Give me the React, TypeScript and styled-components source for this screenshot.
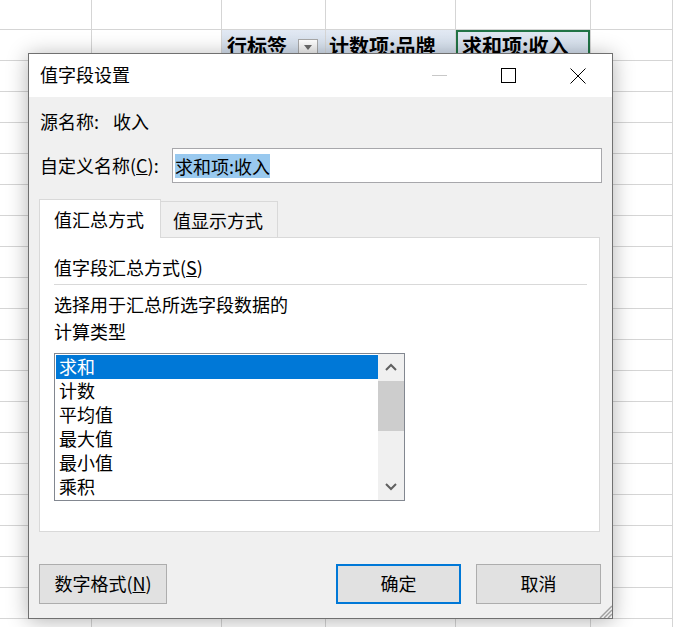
import React from 'react';
import styled, { createGlobalStyle } from 'styled-components';

const GlobalStyle = createGlobalStyle`
    html, body {
        margin: 0;
        padding: 0;
        background: #ffffff;
        overflow: hidden;
    }

    body {
        font-family: "Noto Sans CJK SC", "Noto Sans", sans-serif;
        color: #000000;
    }
`;

const UI_FONT = `"Noto Sans CJK SC", "Noto Sans", sans-serif`;

const Page = styled.div`
    position: relative;
    width: 673px;
    height: 627px;
    overflow: hidden;
`;

const Sheet = styled.div`
    display: grid;
    grid-template-columns: 92px 130px 104px 130px 135px 1fr;
    grid-template-rows: 30px;
    grid-auto-rows: 31px;
`;

interface CellProps {
    $header?: boolean;
    $selected?: boolean;
    $indent?: number;
}

const Cell = styled.div<CellProps>`
    box-sizing: border-box;
    display: flex;
    align-items: center;
    padding-left: ${({ $indent }) => $indent ?? 5}px;
    border-right: 1px solid #d5d5d5;
    border-bottom: 1px solid #d5d5d5;
    font-family: ${UI_FONT};
    font-weight: 700;
    font-size: 20px;
    line-height: 31px;
    white-space: nowrap;
    overflow: hidden;
    background: ${({ $header }) => $header ? 'linear-gradient(#e2e9f3, #cdd9e8)' : 'transparent'};
    ${({ $selected }) => $selected && `box-shadow: inset 0 0 0 2px #217346;`}
`;

const FilterButton = styled.span`
    box-sizing: border-box;
    display: flex;
    align-items: center;
    justify-content: center;
    width: 20px;
    height: 20px;
    margin-left: auto;
    margin-right: 7px;
    margin-top: 8px;
    border: 1px solid #a9a9a9;
    background: linear-gradient(#ffffff, #e6e6e6);

    &::after {
        content: '';
        margin-top: -4px;
        border-left: 4px solid transparent;
        border-right: 4px solid transparent;
        border-top: 5px solid #6a6a6a;
    }
`;

const Dialog = styled.div`
    position: absolute;
    left: 28px;
    top: 53px;
    width: 585px;
    height: 566px;
    box-sizing: border-box;
    display: flex;
    flex-direction: column;
    border: 1px solid #707070;
    background: #f0f0f0;
    box-shadow: 0 2px 20px rgba(0, 0, 0, 0.3);
    font-family: ${UI_FONT};
    font-size: 18px;
`;

const TitleBar = styled.div`
    display: flex;
    align-items: center;
    height: 43px;
    background: #ffffff;
    padding-left: 11px;
`;

const Title = styled.div`
    flex: 1;
    line-height: 24px;
    padding-bottom: 3px;
`;

const WindowButton = styled.div`
    display: flex;
    align-items: center;
    justify-content: center;
    width: 69px;
    height: 43px;
`;

const Body = styled.div`
    flex: 1;
    display: flex;
    flex-direction: column;
    padding: 0 10px 14px 10px;
`;

const SourceRow = styled.div`
    display: flex;
    margin-top: 12px;
    padding-left: 1px;
    line-height: 24px;
`;

const SourceLabel = styled.span`
    width: 73px;
`;

const NameRow = styled.div`
    display: flex;
    align-items: center;
    margin-top: 15px;
    height: 35px;
`;

const NameLabel = styled.label`
    width: 133px;
    padding-left: 1px;
    padding-bottom: 1px;
    box-sizing: border-box;
    line-height: 24px;
`;

const NameInput = styled.div`
    flex: 1;
    box-sizing: border-box;
    height: 35px;
    display: flex;
    align-items: center;
    padding-left: 2px;
    border: 1px solid #a7a7ab;
    background: #ffffff;
`;

const SelectedText = styled.span`
    background: #99c9ef;
    line-height: 24px;
`;

const TabStrip = styled.div`
    display: flex;
    align-items: flex-end;
    margin-top: 16px;
`;

interface TabProps {
    $active?: boolean;
}

const Tab = styled.div<TabProps>`
    box-sizing: border-box;
    display: flex;
    align-items: flex-end;
    padding-bottom: 5px;
    line-height: 24px;
    border: 1px solid #d9d9d9;
    border-bottom: none;
    ${({ $active }) => $active ? `
        position: relative;
        z-index: 1;
        width: 122px;
        height: 39px;
        margin-bottom: -1px;
        padding-left: 14px;
        padding-bottom: 7px;
        background: #ffffff;
    ` : `
        width: 117px;
        height: 36px;
        border-left: none;
        padding-left: 12px;
        background: #f0f0f0;
    `}
`;

const Panel = styled.div`
    box-sizing: border-box;
    height: 295px;
    margin-right: 2px;
    padding: 17px 12px 0 14px;
    border: 1px solid #d9d9d9;
    background: #ffffff;
`;

const GroupTitle = styled.div`
    line-height: 24px;
    padding-bottom: 5px;
    border-bottom: 1px solid #d9d9d9;
`;

const Description = styled.div`
    margin-top: 6px;
    line-height: 27px;
`;

const ListBox = styled.div`
    box-sizing: border-box;
    display: flex;
    width: 351px;
    height: 148px;
    margin-top: 8px;
    border: 1px solid #828790;
    background: #ffffff;
`;

const Items = styled.div`
    flex: 1;
    padding: 1px 0 0 1px;
`;

interface ItemProps {
    $selected?: boolean;
}

const Item = styled.div<ItemProps>`
    height: 24px;
    line-height: 23px;
    padding-left: 3px;
    background: ${({ $selected }) => $selected ? '#0078d7' : 'transparent'};
    color: ${({ $selected }) => $selected ? '#ffffff' : '#000000'};
`;

const ScrollBar = styled.div`
    width: 26px;
    display: flex;
    flex-direction: column;
    background: #f0f0f0;
`;

interface ScrollArrowProps {
    $bottom?: boolean;
}

const ScrollArrow = styled.div<ScrollArrowProps>`
    height: 26px;
    display: flex;
    align-items: center;
    justify-content: center;
    ${({ $bottom }) => $bottom && 'margin-top: auto;'}
`;

const ScrollThumb = styled.div`
    height: 50px;
    margin-top: 1px;
    background: #cdcdcd;
`;

const ButtonRow = styled.div`
    display: flex;
    gap: 15px;
    margin-top: 32px;
    padding-right: 1px;
`;

interface ButtonProps {
    $default?: boolean;
    $width: number;
}

const Button = styled.button<ButtonProps>`
    box-sizing: border-box;
    width: ${({ $width }) => $width}px;
    height: 40px;
    padding: 0 0 2px 0;
    font-family: ${UI_FONT};
    font-size: 18px;
    color: #000000;
    background: #e1e1e1;
    border: ${({ $default }) => $default ? '2px solid #0078d7' : '1px solid #adadad'};

    &:first-child {
        margin-right: auto;
    }
`;

const Grip = styled.svg`
    position: absolute;
    right: 0;
    bottom: 0;
`;

const ChevronUp = () => (
    <svg width="12" height="8" viewBox="0 0 12 8">
        <polyline points="1,7 6,2 11,7" fill="none" stroke="#606060" strokeWidth="2" />
    </svg>
);

const ChevronDown = () => (
    <svg width="12" height="8" viewBox="0 0 12 8">
        <polyline points="1,1 6,6 11,1" fill="none" stroke="#606060" strokeWidth="2" />
    </svg>
);

const summaryTypes = ['求和', '计数', '平均值', '最大值', '最小值', '乘积'];

const renderCell = (row: number, col: number) => {
    if (row === 1 && col === 2) {
        return (
            <Cell key={col} $header>
                行标签
                <FilterButton />
            </Cell>
        );
    }
    if (row === 1 && col === 3) {
        return <Cell key={col} $header $indent={3}>计数项:品牌</Cell>;
    }
    if (row === 1 && col === 4) {
        return <Cell key={col} $header $selected $indent={6}>求和项:收入</Cell>;
    }
    return <Cell key={col} />;
};

export default function App() {
    const rows = Array.from({ length: 21 }, (_, i) => i);
    const cols = Array.from({ length: 6 }, (_, i) => i);

    return (
        <Page>
            <GlobalStyle />
            <Sheet>
                {rows.map((row) => (
                    <React.Fragment key={row}>
                        {cols.map((col) => renderCell(row, col))}
                    </React.Fragment>
                ))}
            </Sheet>

            <Dialog>
                <TitleBar>
                    <Title>值字段设置</Title>
                    <WindowButton>
                        <svg width="15" height="15" viewBox="0 0 15 15">
                            <line x1="0" y1="7.5" x2="15" y2="7.5" stroke="#c8c8c8" strokeWidth="1" />
                        </svg>
                    </WindowButton>
                    <WindowButton>
                        <svg width="15" height="15" viewBox="0 0 15 15">
                            <rect x="0.5" y="0.5" width="14" height="14" fill="none" stroke="#000" strokeWidth="1" />
                        </svg>
                    </WindowButton>
                    <WindowButton>
                        <svg width="16" height="16" viewBox="0 0 16 16">
                            <line x1="0.5" y1="0.5" x2="15.5" y2="15.5" stroke="#000" strokeWidth="1" />
                            <line x1="15.5" y1="0.5" x2="0.5" y2="15.5" stroke="#000" strokeWidth="1" />
                        </svg>
                    </WindowButton>
                </TitleBar>

                <Body>
                    <SourceRow>
                        <SourceLabel>源名称:</SourceLabel>
                        <span>收入</span>
                    </SourceRow>

                    <NameRow>
                        <NameLabel>自定义名称(<u>C</u>):</NameLabel>
                        <NameInput>
                            <SelectedText>求和项:收入</SelectedText>
                        </NameInput>
                    </NameRow>

                    <TabStrip>
                        <Tab $active>值汇总方式</Tab>
                        <Tab>值显示方式</Tab>
                    </TabStrip>

                    <Panel>
                        <GroupTitle>值字段汇总方式(<u>S</u>)</GroupTitle>
                        <Description>
                            选择用于汇总所选字段数据的
                            <br />
                            计算类型
                        </Description>
                        <ListBox>
                            <Items>
                                {summaryTypes.map((type, index) => (
                                    <Item key={type} $selected={index === 0}>{type}</Item>
                                ))}
                            </Items>
                            <ScrollBar>
                                <ScrollArrow><ChevronUp /></ScrollArrow>
                                <ScrollThumb />
                                <ScrollArrow $bottom><ChevronDown /></ScrollArrow>
                            </ScrollBar>
                        </ListBox>
                    </Panel>

                    <ButtonRow>
                        <Button $width={128}>数字格式(<u>N</u>)</Button>
                        <Button $width={125} $default>确定</Button>
                        <Button $width={125}>取消</Button>
                    </ButtonRow>
                </Body>

                <Grip width="14" height="14" viewBox="0 0 14 14">
                    <line x1="14" y1="2" x2="2" y2="14" stroke="#a0a0a0" strokeWidth="1.5" />
                    <line x1="14" y1="6" x2="6" y2="14" stroke="#a0a0a0" strokeWidth="1.5" />
                    <line x1="14" y1="10" x2="10" y2="14" stroke="#a0a0a0" strokeWidth="1.5" />
                </Grip>
            </Dialog>
        </Page>
    );
}
